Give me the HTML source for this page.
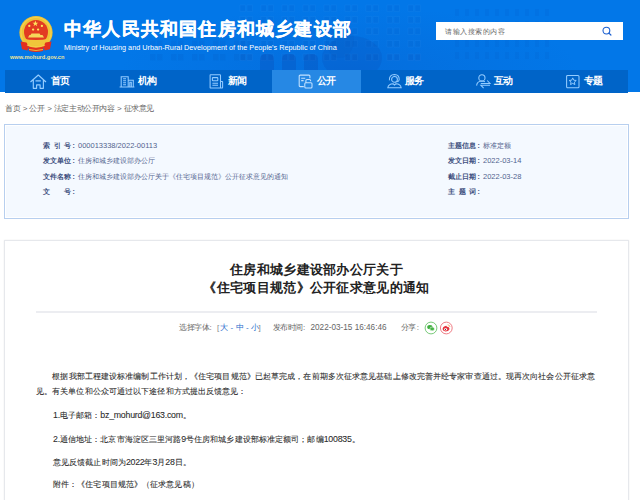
<!DOCTYPE html>
<html><head><meta charset="utf-8">
<style>
*{margin:0;padding:0;box-sizing:border-box}
html,body{width:640px;height:500px;overflow:hidden;background:#fff}
body{position:relative;font-family:"Liberation Sans",sans-serif;color:#333}
.a{position:absolute;white-space:nowrap}
#hdr{position:absolute;left:0;top:0;width:640px;height:92px;background:#0277e8;overflow:hidden}
#nav{position:absolute;left:5px;top:69.7px;width:623px;height:23.2px;background:#0064c8}
.ni{position:absolute;top:0;width:89px;height:23.2px}
.ni.on{background:#2688e4}
.ni svg{position:absolute}
.ni span{position:absolute;top:0;font-size:10px;letter-spacing:-1px;font-weight:bold;color:#fff;line-height:22px}
#crumb{left:5px;top:101.8px;font-size:8px;letter-spacing:-0.45px;word-spacing:0.8px;color:#666;line-height:14px}
#info{position:absolute;left:4px;top:124px;width:625px;height:95px;background:#f4f9ff;border:1px solid #b7cfef;box-shadow:inset 0 0 0 1px #fff}
.lb{position:absolute;font-size:7px;font-weight:bold;color:#3e5080;line-height:14px;white-space:nowrap}
.lb u{text-decoration:none;display:inline-block;margin-left:1.5px;width:5.5px}
.lb i{font-style:normal;display:inline-block;width:28px;text-align:justify;text-align-last:justify}
.vl{position:absolute;font-size:7px;color:#52638e;line-height:14px;white-space:nowrap}
#cont{position:absolute;left:4px;top:239.5px;width:625px;height:300px;border:1px solid #e6e8ec;background:#fff;box-shadow:0 0 1.5px rgba(0,0,40,.08)}
.tt{position:absolute;left:4px;width:625px;text-align:center;font-size:13px;letter-spacing:0.3px;font-weight:bold;color:#222;line-height:18px;white-space:nowrap}
#sep{position:absolute;left:36px;top:311px;width:561px;height:2px;background:#ecedf1}
.meta{position:absolute;top:321px;font-size:8px;letter-spacing:-0.4px;color:#666;line-height:14px;white-space:nowrap}
.p{position:absolute;left:36px;font-size:8px;letter-spacing:0.1px;color:#2b2b2b;-webkit-text-stroke:0.08px #2b2b2b;line-height:14px;white-space:nowrap}
.p b{font-weight:normal;font-size:8.8px;letter-spacing:-0.25px}
.j{width:559px;text-align:justify;text-align-last:justify}
</style></head><body>
<div id="hdr"><svg width="640" height="92" style="position:absolute;left:0;top:0">
<defs><radialGradient id="rg" cx="0.5" cy="0.7" r="0.5"><stop offset="0" stop-color="#0a5cc8" stop-opacity=".35"/><stop offset="1" stop-color="#0a5cc8" stop-opacity="0"/></radialGradient></defs>
<rect x="120" y="-20" width="460" height="130" fill="url(#rg)"/>
<rect x="240" y="5" width="5.5" height="6.5" fill="#0a4fb8" fill-opacity="0.1" stroke="#5aa8ff" stroke-opacity="0.12" stroke-width="0.8"/><rect x="247" y="5" width="5.5" height="6.5" fill="#0a4fb8" fill-opacity="0.1" stroke="#5aa8ff" stroke-opacity="0.12" stroke-width="0.8"/><rect x="240" y="16.5" width="5.5" height="6.5" fill="#0a4fb8" fill-opacity="0.1" stroke="#5aa8ff" stroke-opacity="0.12" stroke-width="0.8"/><rect x="247" y="16.5" width="5.5" height="6.5" fill="#0a4fb8" fill-opacity="0.1" stroke="#5aa8ff" stroke-opacity="0.12" stroke-width="0.8"/><rect x="240" y="28" width="5.5" height="6.5" fill="#0a4fb8" fill-opacity="0.1" stroke="#5aa8ff" stroke-opacity="0.12" stroke-width="0.8"/><rect x="247" y="28" width="5.5" height="6.5" fill="#0a4fb8" fill-opacity="0.1" stroke="#5aa8ff" stroke-opacity="0.12" stroke-width="0.8"/><rect x="240" y="40.5" width="5.5" height="6.5" fill="#0a4fb8" fill-opacity="0.12" stroke="#5aa8ff" stroke-opacity="0.12" stroke-width="0.8"/><rect x="247" y="40.5" width="5.5" height="6.5" fill="#0a4fb8" fill-opacity="0.12" stroke="#5aa8ff" stroke-opacity="0.12" stroke-width="0.8"/><rect x="240" y="54" width="5.5" height="6.5" fill="#0a4fb8" fill-opacity="0.2" stroke="#5aa8ff" stroke-opacity="0.12" stroke-width="0.8"/><rect x="247" y="54" width="5.5" height="6.5" fill="#0a4fb8" fill-opacity="0.2" stroke="#5aa8ff" stroke-opacity="0.12" stroke-width="0.8"/><rect x="261" y="5" width="5.5" height="6.5" fill="#0a4fb8" fill-opacity="0.1" stroke="#5aa8ff" stroke-opacity="0.12" stroke-width="0.8"/><rect x="268" y="5" width="5.5" height="6.5" fill="#0a4fb8" fill-opacity="0.1" stroke="#5aa8ff" stroke-opacity="0.12" stroke-width="0.8"/><rect x="261" y="16.5" width="5.5" height="6.5" fill="#0a4fb8" fill-opacity="0.1" stroke="#5aa8ff" stroke-opacity="0.12" stroke-width="0.8"/><rect x="268" y="16.5" width="5.5" height="6.5" fill="#0a4fb8" fill-opacity="0.1" stroke="#5aa8ff" stroke-opacity="0.12" stroke-width="0.8"/><rect x="261" y="28" width="5.5" height="6.5" fill="#0a4fb8" fill-opacity="0.1" stroke="#5aa8ff" stroke-opacity="0.12" stroke-width="0.8"/><rect x="268" y="28" width="5.5" height="6.5" fill="#0a4fb8" fill-opacity="0.1" stroke="#5aa8ff" stroke-opacity="0.12" stroke-width="0.8"/><rect x="261" y="40.5" width="5.5" height="6.5" fill="#0a4fb8" fill-opacity="0.12" stroke="#5aa8ff" stroke-opacity="0.12" stroke-width="0.8"/><rect x="268" y="40.5" width="5.5" height="6.5" fill="#0a4fb8" fill-opacity="0.12" stroke="#5aa8ff" stroke-opacity="0.12" stroke-width="0.8"/><rect x="261" y="54" width="5.5" height="6.5" fill="#0a4fb8" fill-opacity="0.2" stroke="#5aa8ff" stroke-opacity="0.12" stroke-width="0.8"/><rect x="268" y="54" width="5.5" height="6.5" fill="#0a4fb8" fill-opacity="0.2" stroke="#5aa8ff" stroke-opacity="0.12" stroke-width="0.8"/><rect x="282" y="5" width="5.5" height="6.5" fill="#0a4fb8" fill-opacity="0.1" stroke="#5aa8ff" stroke-opacity="0.12" stroke-width="0.8"/><rect x="289" y="5" width="5.5" height="6.5" fill="#0a4fb8" fill-opacity="0.1" stroke="#5aa8ff" stroke-opacity="0.12" stroke-width="0.8"/><rect x="282" y="16.5" width="5.5" height="6.5" fill="#0a4fb8" fill-opacity="0.1" stroke="#5aa8ff" stroke-opacity="0.12" stroke-width="0.8"/><rect x="289" y="16.5" width="5.5" height="6.5" fill="#0a4fb8" fill-opacity="0.1" stroke="#5aa8ff" stroke-opacity="0.12" stroke-width="0.8"/><rect x="282" y="28" width="5.5" height="6.5" fill="#0a4fb8" fill-opacity="0.1" stroke="#5aa8ff" stroke-opacity="0.12" stroke-width="0.8"/><rect x="289" y="28" width="5.5" height="6.5" fill="#0a4fb8" fill-opacity="0.1" stroke="#5aa8ff" stroke-opacity="0.12" stroke-width="0.8"/><rect x="282" y="40.5" width="5.5" height="6.5" fill="#0a4fb8" fill-opacity="0.12" stroke="#5aa8ff" stroke-opacity="0.12" stroke-width="0.8"/><rect x="289" y="40.5" width="5.5" height="6.5" fill="#0a4fb8" fill-opacity="0.12" stroke="#5aa8ff" stroke-opacity="0.12" stroke-width="0.8"/><rect x="282" y="54" width="5.5" height="6.5" fill="#0a4fb8" fill-opacity="0.2" stroke="#5aa8ff" stroke-opacity="0.12" stroke-width="0.8"/><rect x="289" y="54" width="5.5" height="6.5" fill="#0a4fb8" fill-opacity="0.2" stroke="#5aa8ff" stroke-opacity="0.12" stroke-width="0.8"/><rect x="303" y="5" width="5.5" height="6.5" fill="#0a4fb8" fill-opacity="0.1" stroke="#5aa8ff" stroke-opacity="0.12" stroke-width="0.8"/><rect x="310" y="5" width="5.5" height="6.5" fill="#0a4fb8" fill-opacity="0.1" stroke="#5aa8ff" stroke-opacity="0.12" stroke-width="0.8"/><rect x="303" y="16.5" width="5.5" height="6.5" fill="#0a4fb8" fill-opacity="0.1" stroke="#5aa8ff" stroke-opacity="0.12" stroke-width="0.8"/><rect x="310" y="16.5" width="5.5" height="6.5" fill="#0a4fb8" fill-opacity="0.1" stroke="#5aa8ff" stroke-opacity="0.12" stroke-width="0.8"/><rect x="303" y="28" width="5.5" height="6.5" fill="#0a4fb8" fill-opacity="0.1" stroke="#5aa8ff" stroke-opacity="0.12" stroke-width="0.8"/><rect x="310" y="28" width="5.5" height="6.5" fill="#0a4fb8" fill-opacity="0.1" stroke="#5aa8ff" stroke-opacity="0.12" stroke-width="0.8"/><rect x="303" y="40.5" width="5.5" height="6.5" fill="#0a4fb8" fill-opacity="0.12" stroke="#5aa8ff" stroke-opacity="0.12" stroke-width="0.8"/><rect x="310" y="40.5" width="5.5" height="6.5" fill="#0a4fb8" fill-opacity="0.12" stroke="#5aa8ff" stroke-opacity="0.12" stroke-width="0.8"/><rect x="303" y="54" width="5.5" height="6.5" fill="#0a4fb8" fill-opacity="0.2" stroke="#5aa8ff" stroke-opacity="0.12" stroke-width="0.8"/><rect x="310" y="54" width="5.5" height="6.5" fill="#0a4fb8" fill-opacity="0.2" stroke="#5aa8ff" stroke-opacity="0.12" stroke-width="0.8"/><rect x="324" y="5" width="5.5" height="6.5" fill="#0a4fb8" fill-opacity="0.1" stroke="#5aa8ff" stroke-opacity="0.12" stroke-width="0.8"/><rect x="331" y="5" width="5.5" height="6.5" fill="#0a4fb8" fill-opacity="0.1" stroke="#5aa8ff" stroke-opacity="0.12" stroke-width="0.8"/><rect x="324" y="16.5" width="5.5" height="6.5" fill="#0a4fb8" fill-opacity="0.1" stroke="#5aa8ff" stroke-opacity="0.12" stroke-width="0.8"/><rect x="331" y="16.5" width="5.5" height="6.5" fill="#0a4fb8" fill-opacity="0.1" stroke="#5aa8ff" stroke-opacity="0.12" stroke-width="0.8"/><rect x="324" y="28" width="5.5" height="6.5" fill="#0a4fb8" fill-opacity="0.1" stroke="#5aa8ff" stroke-opacity="0.12" stroke-width="0.8"/><rect x="331" y="28" width="5.5" height="6.5" fill="#0a4fb8" fill-opacity="0.1" stroke="#5aa8ff" stroke-opacity="0.12" stroke-width="0.8"/><rect x="324" y="40.5" width="5.5" height="6.5" fill="#0a4fb8" fill-opacity="0.12" stroke="#5aa8ff" stroke-opacity="0.12" stroke-width="0.8"/><rect x="331" y="40.5" width="5.5" height="6.5" fill="#0a4fb8" fill-opacity="0.12" stroke="#5aa8ff" stroke-opacity="0.12" stroke-width="0.8"/><rect x="324" y="54" width="5.5" height="6.5" fill="#0a4fb8" fill-opacity="0.2" stroke="#5aa8ff" stroke-opacity="0.12" stroke-width="0.8"/><rect x="331" y="54" width="5.5" height="6.5" fill="#0a4fb8" fill-opacity="0.2" stroke="#5aa8ff" stroke-opacity="0.12" stroke-width="0.8"/><rect x="345" y="5" width="5.5" height="6.5" fill="#0a4fb8" fill-opacity="0.1" stroke="#5aa8ff" stroke-opacity="0.12" stroke-width="0.8"/><rect x="352" y="5" width="5.5" height="6.5" fill="#0a4fb8" fill-opacity="0.1" stroke="#5aa8ff" stroke-opacity="0.12" stroke-width="0.8"/><rect x="345" y="16.5" width="5.5" height="6.5" fill="#0a4fb8" fill-opacity="0.1" stroke="#5aa8ff" stroke-opacity="0.12" stroke-width="0.8"/><rect x="352" y="16.5" width="5.5" height="6.5" fill="#0a4fb8" fill-opacity="0.1" stroke="#5aa8ff" stroke-opacity="0.12" stroke-width="0.8"/><rect x="345" y="28" width="5.5" height="6.5" fill="#0a4fb8" fill-opacity="0.1" stroke="#5aa8ff" stroke-opacity="0.12" stroke-width="0.8"/><rect x="352" y="28" width="5.5" height="6.5" fill="#0a4fb8" fill-opacity="0.1" stroke="#5aa8ff" stroke-opacity="0.12" stroke-width="0.8"/><rect x="345" y="40.5" width="5.5" height="6.5" fill="#0a4fb8" fill-opacity="0.12" stroke="#5aa8ff" stroke-opacity="0.12" stroke-width="0.8"/><rect x="352" y="40.5" width="5.5" height="6.5" fill="#0a4fb8" fill-opacity="0.12" stroke="#5aa8ff" stroke-opacity="0.12" stroke-width="0.8"/><rect x="345" y="54" width="5.5" height="6.5" fill="#0a4fb8" fill-opacity="0.2" stroke="#5aa8ff" stroke-opacity="0.12" stroke-width="0.8"/><rect x="352" y="54" width="5.5" height="6.5" fill="#0a4fb8" fill-opacity="0.2" stroke="#5aa8ff" stroke-opacity="0.12" stroke-width="0.8"/><rect x="366" y="5" width="5.5" height="6.5" fill="#0a4fb8" fill-opacity="0.1" stroke="#5aa8ff" stroke-opacity="0.12" stroke-width="0.8"/><rect x="373" y="5" width="5.5" height="6.5" fill="#0a4fb8" fill-opacity="0.1" stroke="#5aa8ff" stroke-opacity="0.12" stroke-width="0.8"/><rect x="366" y="16.5" width="5.5" height="6.5" fill="#0a4fb8" fill-opacity="0.1" stroke="#5aa8ff" stroke-opacity="0.12" stroke-width="0.8"/><rect x="373" y="16.5" width="5.5" height="6.5" fill="#0a4fb8" fill-opacity="0.1" stroke="#5aa8ff" stroke-opacity="0.12" stroke-width="0.8"/><rect x="366" y="28" width="5.5" height="6.5" fill="#0a4fb8" fill-opacity="0.1" stroke="#5aa8ff" stroke-opacity="0.12" stroke-width="0.8"/><rect x="373" y="28" width="5.5" height="6.5" fill="#0a4fb8" fill-opacity="0.1" stroke="#5aa8ff" stroke-opacity="0.12" stroke-width="0.8"/><rect x="366" y="40.5" width="5.5" height="6.5" fill="#0a4fb8" fill-opacity="0.12" stroke="#5aa8ff" stroke-opacity="0.12" stroke-width="0.8"/><rect x="373" y="40.5" width="5.5" height="6.5" fill="#0a4fb8" fill-opacity="0.12" stroke="#5aa8ff" stroke-opacity="0.12" stroke-width="0.8"/><rect x="366" y="54" width="5.5" height="6.5" fill="#0a4fb8" fill-opacity="0.2" stroke="#5aa8ff" stroke-opacity="0.12" stroke-width="0.8"/><rect x="373" y="54" width="5.5" height="6.5" fill="#0a4fb8" fill-opacity="0.2" stroke="#5aa8ff" stroke-opacity="0.12" stroke-width="0.8"/><rect x="387" y="5" width="5.5" height="6.5" fill="#0a4fb8" fill-opacity="0.1" stroke="#5aa8ff" stroke-opacity="0.12" stroke-width="0.8"/><rect x="394" y="5" width="5.5" height="6.5" fill="#0a4fb8" fill-opacity="0.1" stroke="#5aa8ff" stroke-opacity="0.12" stroke-width="0.8"/><rect x="387" y="16.5" width="5.5" height="6.5" fill="#0a4fb8" fill-opacity="0.1" stroke="#5aa8ff" stroke-opacity="0.12" stroke-width="0.8"/><rect x="394" y="16.5" width="5.5" height="6.5" fill="#0a4fb8" fill-opacity="0.1" stroke="#5aa8ff" stroke-opacity="0.12" stroke-width="0.8"/><rect x="387" y="28" width="5.5" height="6.5" fill="#0a4fb8" fill-opacity="0.1" stroke="#5aa8ff" stroke-opacity="0.12" stroke-width="0.8"/><rect x="394" y="28" width="5.5" height="6.5" fill="#0a4fb8" fill-opacity="0.1" stroke="#5aa8ff" stroke-opacity="0.12" stroke-width="0.8"/><rect x="387" y="40.5" width="5.5" height="6.5" fill="#0a4fb8" fill-opacity="0.12" stroke="#5aa8ff" stroke-opacity="0.12" stroke-width="0.8"/><rect x="394" y="40.5" width="5.5" height="6.5" fill="#0a4fb8" fill-opacity="0.12" stroke="#5aa8ff" stroke-opacity="0.12" stroke-width="0.8"/><rect x="387" y="54" width="5.5" height="6.5" fill="#0a4fb8" fill-opacity="0.2" stroke="#5aa8ff" stroke-opacity="0.12" stroke-width="0.8"/><rect x="394" y="54" width="5.5" height="6.5" fill="#0a4fb8" fill-opacity="0.2" stroke="#5aa8ff" stroke-opacity="0.12" stroke-width="0.8"/><rect x="408" y="5" width="5.5" height="6.5" fill="#0a4fb8" fill-opacity="0.1" stroke="#5aa8ff" stroke-opacity="0.12" stroke-width="0.8"/><rect x="415" y="5" width="5.5" height="6.5" fill="#0a4fb8" fill-opacity="0.1" stroke="#5aa8ff" stroke-opacity="0.12" stroke-width="0.8"/><rect x="408" y="16.5" width="5.5" height="6.5" fill="#0a4fb8" fill-opacity="0.1" stroke="#5aa8ff" stroke-opacity="0.12" stroke-width="0.8"/><rect x="415" y="16.5" width="5.5" height="6.5" fill="#0a4fb8" fill-opacity="0.1" stroke="#5aa8ff" stroke-opacity="0.12" stroke-width="0.8"/><rect x="408" y="28" width="5.5" height="6.5" fill="#0a4fb8" fill-opacity="0.1" stroke="#5aa8ff" stroke-opacity="0.12" stroke-width="0.8"/><rect x="415" y="28" width="5.5" height="6.5" fill="#0a4fb8" fill-opacity="0.1" stroke="#5aa8ff" stroke-opacity="0.12" stroke-width="0.8"/><rect x="408" y="40.5" width="5.5" height="6.5" fill="#0a4fb8" fill-opacity="0.12" stroke="#5aa8ff" stroke-opacity="0.12" stroke-width="0.8"/><rect x="415" y="40.5" width="5.5" height="6.5" fill="#0a4fb8" fill-opacity="0.12" stroke="#5aa8ff" stroke-opacity="0.12" stroke-width="0.8"/><rect x="408" y="54" width="5.5" height="6.5" fill="#0a4fb8" fill-opacity="0.2" stroke="#5aa8ff" stroke-opacity="0.12" stroke-width="0.8"/><rect x="415" y="54" width="5.5" height="6.5" fill="#0a4fb8" fill-opacity="0.2" stroke="#5aa8ff" stroke-opacity="0.12" stroke-width="0.8"/><rect x="455" y="9" width="4" height="7" fill="#0a4fb8" fill-opacity="0.1"/><rect x="455" y="21" width="4" height="7" fill="#0a4fb8" fill-opacity="0.1"/><rect x="455" y="40" width="4" height="7" fill="#0a4fb8" fill-opacity="0.1"/><rect x="455" y="52" width="4" height="7" fill="#0a4fb8" fill-opacity="0.1"/><rect x="465" y="9" width="4" height="7" fill="#0a4fb8" fill-opacity="0.1"/><rect x="465" y="21" width="4" height="7" fill="#0a4fb8" fill-opacity="0.1"/><rect x="465" y="40" width="4" height="7" fill="#0a4fb8" fill-opacity="0.1"/><rect x="465" y="52" width="4" height="7" fill="#0a4fb8" fill-opacity="0.1"/><rect x="475" y="9" width="4" height="7" fill="#0a4fb8" fill-opacity="0.1"/><rect x="475" y="21" width="4" height="7" fill="#0a4fb8" fill-opacity="0.1"/><rect x="475" y="40" width="4" height="7" fill="#0a4fb8" fill-opacity="0.1"/><rect x="475" y="52" width="4" height="7" fill="#0a4fb8" fill-opacity="0.1"/><rect x="485" y="9" width="4" height="7" fill="#0a4fb8" fill-opacity="0.1"/><rect x="485" y="21" width="4" height="7" fill="#0a4fb8" fill-opacity="0.1"/><rect x="485" y="40" width="4" height="7" fill="#0a4fb8" fill-opacity="0.1"/><rect x="485" y="52" width="4" height="7" fill="#0a4fb8" fill-opacity="0.1"/><rect x="495" y="9" width="4" height="7" fill="#0a4fb8" fill-opacity="0.1"/><rect x="495" y="21" width="4" height="7" fill="#0a4fb8" fill-opacity="0.1"/><rect x="495" y="40" width="4" height="7" fill="#0a4fb8" fill-opacity="0.1"/><rect x="495" y="52" width="4" height="7" fill="#0a4fb8" fill-opacity="0.1"/><rect x="505" y="9" width="4" height="7" fill="#0a4fb8" fill-opacity="0.1"/><rect x="505" y="21" width="4" height="7" fill="#0a4fb8" fill-opacity="0.1"/><rect x="505" y="40" width="4" height="7" fill="#0a4fb8" fill-opacity="0.1"/><rect x="505" y="52" width="4" height="7" fill="#0a4fb8" fill-opacity="0.1"/><rect x="515" y="9" width="4" height="7" fill="#0a4fb8" fill-opacity="0.1"/><rect x="515" y="21" width="4" height="7" fill="#0a4fb8" fill-opacity="0.1"/><rect x="515" y="40" width="4" height="7" fill="#0a4fb8" fill-opacity="0.1"/><rect x="515" y="52" width="4" height="7" fill="#0a4fb8" fill-opacity="0.1"/><rect x="525" y="9" width="4" height="7" fill="#0a4fb8" fill-opacity="0.1"/><rect x="525" y="21" width="4" height="7" fill="#0a4fb8" fill-opacity="0.1"/><rect x="525" y="40" width="4" height="7" fill="#0a4fb8" fill-opacity="0.1"/><rect x="525" y="52" width="4" height="7" fill="#0a4fb8" fill-opacity="0.1"/><rect x="535" y="9" width="4" height="7" fill="#0a4fb8" fill-opacity="0.1"/><rect x="535" y="21" width="4" height="7" fill="#0a4fb8" fill-opacity="0.1"/><rect x="535" y="40" width="4" height="7" fill="#0a4fb8" fill-opacity="0.1"/><rect x="535" y="52" width="4" height="7" fill="#0a4fb8" fill-opacity="0.1"/><rect x="545" y="9" width="4" height="7" fill="#0a4fb8" fill-opacity="0.1"/><rect x="545" y="21" width="4" height="7" fill="#0a4fb8" fill-opacity="0.1"/><rect x="545" y="40" width="4" height="7" fill="#0a4fb8" fill-opacity="0.1"/><rect x="545" y="52" width="4" height="7" fill="#0a4fb8" fill-opacity="0.1"/><rect x="150" y="40.5" width="5.5" height="6.5" fill="#0a4fb8" fill-opacity="0.12"/><rect x="157" y="40.5" width="5.5" height="6.5" fill="#0a4fb8" fill-opacity="0.12"/><rect x="150" y="54" width="5.5" height="6.5" fill="#0a4fb8" fill-opacity="0.12"/><rect x="157" y="54" width="5.5" height="6.5" fill="#0a4fb8" fill-opacity="0.12"/><rect x="171" y="40.5" width="5.5" height="6.5" fill="#0a4fb8" fill-opacity="0.12"/><rect x="178" y="40.5" width="5.5" height="6.5" fill="#0a4fb8" fill-opacity="0.12"/><rect x="171" y="54" width="5.5" height="6.5" fill="#0a4fb8" fill-opacity="0.12"/><rect x="178" y="54" width="5.5" height="6.5" fill="#0a4fb8" fill-opacity="0.12"/><rect x="192" y="40.5" width="5.5" height="6.5" fill="#0a4fb8" fill-opacity="0.12"/><rect x="199" y="40.5" width="5.5" height="6.5" fill="#0a4fb8" fill-opacity="0.12"/><rect x="192" y="54" width="5.5" height="6.5" fill="#0a4fb8" fill-opacity="0.12"/><rect x="199" y="54" width="5.5" height="6.5" fill="#0a4fb8" fill-opacity="0.12"/><rect x="213" y="40.5" width="5.5" height="6.5" fill="#0a4fb8" fill-opacity="0.12"/><rect x="220" y="40.5" width="5.5" height="6.5" fill="#0a4fb8" fill-opacity="0.12"/><rect x="213" y="54" width="5.5" height="6.5" fill="#0a4fb8" fill-opacity="0.12"/><rect x="220" y="54" width="5.5" height="6.5" fill="#0a4fb8" fill-opacity="0.12"/><rect x="234" y="40.5" width="5.5" height="6.5" fill="#0a4fb8" fill-opacity="0.12"/><rect x="241" y="40.5" width="5.5" height="6.5" fill="#0a4fb8" fill-opacity="0.12"/><rect x="234" y="54" width="5.5" height="6.5" fill="#0a4fb8" fill-opacity="0.12"/><rect x="241" y="54" width="5.5" height="6.5" fill="#0a4fb8" fill-opacity="0.12"/>
<path d="M260 70 V59 Q260 54 267 54 Q274 54 274 59 V70Z" fill="#0a4fb8" fill-opacity="0.32"/><path d="M282 70 V59 Q282 54 289 54 Q296 54 296 59 V70Z" fill="#0a4fb8" fill-opacity="0.32"/><path d="M304 70 V59 Q304 54 311 54 Q318 54 318 59 V70Z" fill="#0a4fb8" fill-opacity="0.32"/><ellipse cx="352" cy="58" rx="30" ry="22" fill="#0a4fb8" fill-opacity="0.22"/>
<ellipse cx="340" cy="40" rx="14" ry="18" fill="#0a4fb8" fill-opacity="0.12"/>
</svg></div>
<svg class="a" style="left:0;top:0" width="70" height="62" viewBox="0 0 70 62">
  <circle cx="36" cy="32.5" r="16.6" fill="#eec236"/>
  <circle cx="36" cy="32.5" r="15" fill="none" stroke="#f7d75a" stroke-width="1.2" opacity=".7"/>
  <circle cx="36" cy="32" r="12" fill="#e23a22"/>
  <path d="M35.4 20.6 l0.75 2.1 h2.2 l-1.8 1.35 0.7 2.1 -1.85-1.3 -1.85 1.3 0.7-2.1 -1.8-1.35 h2.2z" fill="#ffe45c"/>
  <circle cx="29.3" cy="25.9" r="1.15" fill="#ffe45c"/><circle cx="41.9" cy="25.9" r="1.15" fill="#ffe45c"/>
  <circle cx="33.1" cy="29.6" r="1.15" fill="#ffe45c"/><circle cx="38.1" cy="29.6" r="1.15" fill="#ffe45c"/>
  <path d="M30.5 35 h10 l-1-1.6 h-8z M28 37.5 h16 l-1.5-2.5 h-13z" fill="#f6d75a"/>
  <path d="M22.5 38.5 Q36 41.5 49.5 38.5 L48.8 43.5 Q36 47.5 23.2 43.5Z" fill="#f0c53a"/>
  <path d="M20.5 41.5 L26.5 42.5 L28.5 46 L27.5 50.5 L22 49.2Z M51.5 41.5 L45.5 42.5 L43.5 46 L44.5 50.5 L50 49.2Z M28 46 Q36 49 44 46 L43 51 Q36 53 29 51Z" fill="#e3301f"/>
  <path d="M27 45 Q36 48.5 45 45" stroke="#f3cc48" stroke-width="1.3" fill="none"/>
  <path d="M29 49.5 Q36 51.5 43 49.5" stroke="#f0c53a" stroke-width="0.9" fill="none"/>
</svg>
<div class="a" style="left:10px;top:52.8px;font-size:5.6px;font-weight:bold;color:#ece49a;line-height:8px">www.mohurd.gov.cn</div>
<div class="a" style="left:64px;top:17px;font-size:18px;letter-spacing:1.2px;font-weight:bold;color:#fff;line-height:24px;-webkit-text-stroke:0.3px #fff">中华人民共和国住房和城乡建设部</div>
<div class="a" style="left:64px;top:42.5px;font-size:7.3px;color:#fff;line-height:10px">Ministry of Housing and Urban-Rural Development of the People's Republic of China</div>
<div class="a" style="left:436px;top:22px;width:187px;height:18px;background:#fff"></div>
<div class="a" style="left:445px;top:24.5px;font-size:7px;letter-spacing:0.5px;color:#666;line-height:14px">请输入搜索的内容</div>
<svg class="a" style="left:600px;top:24px" width="14" height="14" viewBox="0 0 14 14"><circle cx="6.4" cy="6.6" r="3.4" stroke="#1a5fd0" stroke-width="1.1" fill="none"/><path d="M8.9 9.1 l2 1.9" stroke="#1a5fd0" stroke-width="1.2" stroke-linecap="round"/></svg>

<div id="nav">
  <div class="ni" style="left:0"><svg style="left:25px;top:4px" width="17" height="16" viewBox="0 0 17 16"><path d="M0.5 8 L8.3 1 L16 8 M3.3 6 V14.3 H6.6 V10.8 H10.1 V14.3 H13.4 V6 M5.5 6.9 H10.8" stroke="#94ccff" stroke-width="1.15" fill="none" stroke-linejoin="round"/></svg><span style="left:45.5px">首页</span></div>
  <div class="ni" style="left:89px"><svg style="left:25px;top:5px" width="16" height="14" viewBox="0 0 16 14"><path d="M0.6 12 H15.4 M2.2 12 V1.7 H9.2 V12 M9.2 5.2 H14.3 V12 M4.1 3.7 H7 M4.1 5.7 H7 M4.1 7.7 H7 M4.1 9.7 H7 M10.8 12 V7.2 H12.3 V12" stroke="#94ccff" stroke-width="1.05" fill="none"/></svg><span style="left:43.5px">机构</span></div>
  <div class="ni" style="left:178px"><svg style="left:26px;top:4.5px" width="15" height="15" viewBox="0 0 15 15"><path d="M1.6 0.8 H10.9 Q11.5 0.8 11.5 1.4 V14 H1.6 Q1.1 14 1.1 13.4 V1.4 Q1.1 0.8 1.6 0.8Z M11.5 7.4 H13.2 Q13.6 7.4 13.6 7.8 V13.6 Q13.6 14 13.2 14 H11.5 M4 3.6 H8.2 Q8.8 3.6 8.8 4.2 V6.2 Q8.8 6.8 8.2 6.8 H4 Q3.4 6.8 3.4 6.2 V4.2 Q3.4 3.6 4 3.6Z M3.4 9.2 H9 M3.4 11.3 H9" stroke="#94ccff" stroke-width="1.05" fill="none"/></svg><span style="left:44.5px">新闻</span></div>
  <div class="ni on" style="left:267px"><svg style="left:26px;top:4.5px" width="16" height="15" viewBox="0 0 16 15"><path d="M5.8 12.6 H2.2 Q1.2 12.6 1.2 11.6 V2.1 Q1.2 1.1 2.2 1.1 H10.9 Q11.9 1.1 11.9 2.1 V4.2 M3.2 4.2 H7.2 M3.2 6.6 H5.6 M7.8 8.8 H13 Q14 8.8 14 9.8 V12.9 Q14 13.9 13 13.9 H7.8 Q6.8 13.9 6.8 12.9 V9.8 Q6.8 8.8 7.8 8.8Z M7.9 8.8 V6.6 Q7.9 5.5 9 5.5 H11.5 Q12.6 5.5 12.6 6.6 V7.3" stroke="#c4e2ff" stroke-width="1.05" fill="none"/></svg><span style="left:44.5px">公开</span></div>
  <div class="ni" style="left:356px"><svg style="left:26px;top:4.5px" width="16" height="15" viewBox="0 0 16 15"><circle cx="7.5" cy="5.4" r="2.9" stroke="#94ccff" stroke-width="1.05" fill="none"/><path d="M2.4 6.4 Q2 0.7 7.5 0.6 Q12.4 0.7 12.2 5.8 Q12 7.6 10 7.8 M0.8 13.8 Q1.4 10 6.2 9.8 L7.5 11 L8.8 9.8 Q13.6 10 14.2 13.8 Z" stroke="#94ccff" stroke-width="1.05" fill="none"/></svg><span style="left:44px">服务</span></div>
  <div class="ni" style="left:445px"><svg style="left:26px;top:4.5px" width="16" height="15" viewBox="0 0 16 15"><circle cx="5.9" cy="3.9" r="3.1" stroke="#94ccff" stroke-width="1.05" fill="none"/><path d="M0.6 11.6 Q0.9 7.2 5.9 7 Q7.8 7 8.9 7.7 M4.8 9.5 H14 L11.2 6.5 M14 11.2 H4.8 L7.6 14.2" stroke="#94ccff" stroke-width="1.05" fill="none"/></svg><span style="left:44px">互动</span></div>
  <div class="ni" style="left:534px"><svg style="left:26px;top:4.5px" width="16" height="16" viewBox="0 0 16 16"><rect x="1.6" y="1.4" width="12.4" height="12.4" rx="1" stroke="#94ccff" stroke-width="1.05" fill="none"/><path d="M7.70 3.90 L8.73 6.18 L11.22 6.46 L9.36 8.14 L9.87 10.59 L7.70 9.35 L5.53 10.59 L6.04 8.14 L4.18 6.46 L6.67 6.18Z" stroke="#94ccff" stroke-width="1" fill="none" stroke-linejoin="round"/></svg><span style="left:45px">专题</span></div>
</div>

<div class="a" id="crumb">首页 &gt; 公开 &gt; 法定主动公开内容 &gt; 征求意见</div>

<div id="info"></div>
<div class="lb" style="left:43px;top:138.5px"><i>索引号</i><u>:</u></div><div class="vl" style="left:78px;top:138.5px"><span style="font-size:7.5px">000013338/2022-00113</span></div>
<div class="lb" style="left:43px;top:154px">发文单位<u>:</u></div><div class="vl" style="left:78px;top:154px">住房和城乡建设部办公厅</div>
<div class="lb" style="left:43px;top:169.5px">文件名称<u>:</u></div><div class="vl" style="left:78px;top:169.5px">住房和城乡建设部办公厅关于《住宅项目规范》公开征求意见的通知</div>
<div class="lb" style="left:43px;top:185px"><i>文号</i><u>:</u></div>
<div class="lb" style="left:448px;top:138.5px">主题信息<u>:</u></div><div class="vl" style="left:483px;top:138.5px">标准定额</div>
<div class="lb" style="left:448px;top:154px">发文日期<u>:</u></div><div class="vl" style="left:483px;top:154px"><span style="font-size:7.5px">2022-03-14</span></div>
<div class="lb" style="left:448px;top:169.5px">截止日期<u>:</u></div><div class="vl" style="left:483px;top:169.5px"><span style="font-size:7.5px">2022-03-28</span></div>
<div class="lb" style="left:448px;top:185px"><i>主题词</i><u>:</u></div>

<div id="cont"></div>
<div class="tt" style="top:261px">住房和城乡建设部办公厅关于</div>
<div class="tt" style="top:279px">《住宅项目规范》公开征求意见的通知</div>
<div id="sep"></div>
<div class="meta" style="left:179px">选择字体<span style="position:absolute;left:30.5px;letter-spacing:0">:</span><span style="position:absolute;left:38px;color:#888;letter-spacing:0">[</span><span style="position:absolute;left:41px;color:#2a6ccc;letter-spacing:0;word-spacing:0.2px">大 - 中 - 小</span><span style="position:absolute;left:79.5px;color:#888;letter-spacing:0">]</span></div>
<div class="meta" style="left:272.5px">发布时间<span style="position:absolute;left:30.5px;letter-spacing:0">:</span><span style="position:absolute;left:38px;letter-spacing:0;font-size:8.2px">2022-03-15 16:46:46</span></div>
<div class="meta" style="left:400.5px">分享<span style="letter-spacing:0;margin-left:1px">:</span></div>
<svg class="a" style="left:424px;top:321px" width="30" height="14" viewBox="0 0 30 14">
  <circle cx="7" cy="7" r="5.9" stroke="#69c36a" stroke-width="0.9" fill="#fff"/>
  <ellipse cx="5.9" cy="6.1" rx="2.7" ry="2.2" fill="#3fae3f"/><ellipse cx="8.2" cy="7.9" rx="2.3" ry="1.9" fill="#47b547" stroke="#fff" stroke-width=".5"/>
  <circle cx="22.3" cy="7" r="5.9" stroke="#ec6f78" stroke-width="0.9" fill="#fff"/>
  <path d="M18.6 8.2 Q18.4 5.8 21.5 4.9 Q23.2 4.6 22.8 5.9 Q24.8 5.2 24.8 6.4 Q25.8 6.9 25.4 8.4 Q24.5 10.5 21.6 10.5 Q18.8 10.3 18.6 8.2Z" fill="#e5323e"/>
  <ellipse cx="21.6" cy="8.4" rx="1.6" ry="1.1" fill="#fff"/><circle cx="21.5" cy="8.5" r=".6" fill="#333"/>
  <path d="M23.6 3.8 Q25.9 3.9 26 6" stroke="#f08a3a" stroke-width=".7" fill="none"/>
</svg>

<div class="p j" style="top:370px;text-indent:16.4px;letter-spacing:0">根据我部工程建设标准编制工作计划，《住宅项目规范》已起草完成，在前期多次征求意见基础上修改完善并经专家审查通过。现再次向社会公开征求意</div>
<div class="p" style="top:385px">见。有关单位和公众可通过以下途径和方式提出反馈意见：</div>
<div class="p" style="top:408px;left:53px"><b>1.</b>电子邮箱：<b>bz_mohurd@163.com</b>。</div>
<div class="p" style="top:431.5px;left:53px"><b>2.</b>通信地址：北京市海淀区三里河路<b>9</b>号住房和城乡建设部标准定额司；邮编<b>100835</b>。</div>
<div class="p" style="top:454.5px;left:53px">意见反馈截止时间为<b>2022</b>年<b>3</b>月<b>28</b>日。</div>
<div class="p" style="top:477.5px;left:53px">附件：《住宅项目规范》（征求意见稿）</div>
</body></html>
